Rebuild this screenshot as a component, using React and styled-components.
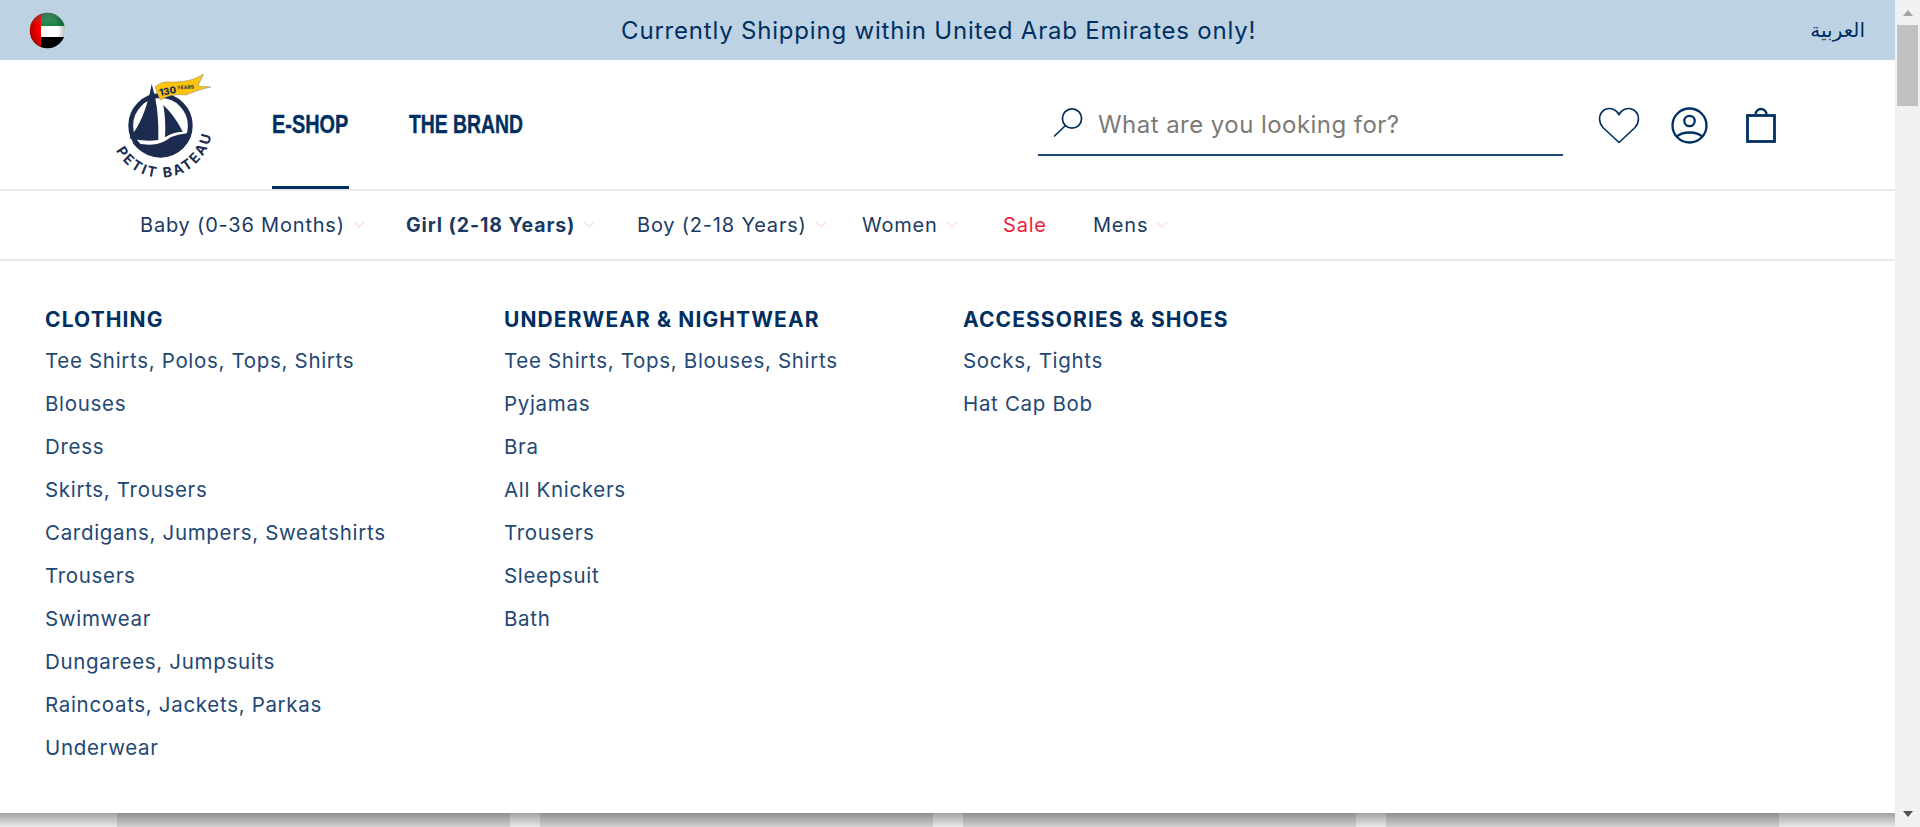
import React from 'react'
import styled, { createGlobalStyle } from 'styled-components'

const GlobalStyle = createGlobalStyle`
    html, body {
        margin: 0;
        padding: 0;
        background: #fff;
        overflow: hidden;
    }
    * {
        box-sizing: border-box;
    }
`

const BODY_FONT = `Inter, "Noto Sans", sans-serif`
const NAV_FONT = `"Liberation Sans", sans-serif`

const Page = styled.div`
    display: flex;
    width: 1920px;
    height: 827px;
    overflow: hidden;
    font-family: ${BODY_FONT};
`

const Main = styled.div`
    flex: 1;
    display: flex;
    flex-direction: column;
    min-width: 0;
`

const Banner = styled.div`
    height: 60px;
    background: #bdd3e3;
    display: flex;
    align-items: center;
    justify-content: space-between;
    padding: 0 30px 0 29px;
`

const BannerText = styled.div`
    font-size: 24px;
    font-weight: 400;
    color: #002f61;
    letter-spacing: 0.8px;
    margin-left: 1px;
`

const ArabicLink = styled.a`
    font-family: "DejaVu Sans", sans-serif;
    font-size: 20px;
    color: #002f61;
`

const Header = styled.div`
    height: 131px;
    display: flex;
    align-items: stretch;
    padding-left: 115px;
    border-bottom: 2px solid #e9e9e9;
`

const LogoWrap = styled.div`
    width: 100px;
    margin-right: 57px;
    padding-top: 12px;
`

const LogoSvg = styled.svg`
    overflow: visible;
`

const TopNav = styled.nav`
    display: flex;
    gap: 60px;
`

const TopNavItem = styled.a`
    width: ${props => props.$width}px;
    display: flex;
    align-items: center;
    padding-top: 3px;
    border-bottom: 3px solid ${props => props.$active ? '#002f61' : 'transparent'};
`

const TopNavLabel = styled.span`
    font-family: ${NAV_FONT};
    font-weight: 700;
    font-size: 26px;
    color: #002f61;
    white-space: nowrap;
    -webkit-text-stroke: 0.4px #002f61;
    transform: scaleX(${props => props.$squeeze});
    transform-origin: left center;
`

const SearchBox = styled.div`
    width: 525px;
    height: 96px;
    margin-left: ${props => props.$offset}px;
    display: flex;
    align-items: center;
    gap: 15px;
    padding: 34px 0 0 15px;
    border-bottom: 2px solid #1c4a78;
`

const SearchGlyph = styled.svg`
    margin-top: -5px;
    flex: none;
`

const Placeholder = styled.span`
    font-size: 24px;
    font-weight: 400;
    letter-spacing: 0.45px;
    color: #7d7a76;
`

const IconRow = styled.div`
    display: flex;
    margin-left: 35px;
    padding-top: 47px;
    align-items: flex-start;
    gap: 31px;
`

const BagGlyph = styled.svg`
    margin-left: 7px;
`

const SubNav = styled.nav`
    height: 70px;
    display: flex;
    align-items: center;
    padding-left: 140px;
    border-bottom: 2px solid #e9e9e9;
    flex: none;
`

const SubNavItem = styled.a`
    display: flex;
    align-items: center;
    width: ${props => props.$width}px;
    font-size: ${props => props.$bold ? 19.5 : 20}px;
    letter-spacing: ${props => props.$bold ? 0.9 : 0.8}px;
    font-weight: ${props => props.$bold ? 700 : 400};
    color: ${props => props.$red ? '#ee1c3a' : '#1a3a63'};
`

const Chevron = styled.svg`
    margin-left: 8px;
    flex: none;
`

const Menu = styled.div`
    flex: 1;
    display: flex;
    padding: 46px 0 0 45px;
`

const MenuColumn = styled.div`
    width: 459px;
    display: flex;
    flex-direction: column;
`

const MenuTitle = styled.div`
    height: 37px;
    line-height: 26px;
    font-size: 21px;
    font-weight: 700;
    letter-spacing: 1.1px;
    color: #002f61;
`

const MenuLink = styled.a`
    height: 43px;
    line-height: 33px;
    font-size: 20.5px;
    font-weight: 400;
    letter-spacing: 0.68px;
    color: #1f4874;
`

const Peek = styled.div`
    flex: none;
    height: 14px;
    position: relative;
    display: flex;
    gap: 30px;
    padding-left: 117px;
    background: #f0f0f0;
`

const PeekCard = styled.div`
    width: 393px;
    background: #d6d6d6;
`

const PeekShadow = styled.div`
    position: absolute;
    inset: 0;
    background: linear-gradient(to bottom, rgba(0, 0, 0, 0.33), rgba(0, 0, 0, 0.03));
`

const Scrollbar = styled.div`
    width: 25px;
    flex: none;
    background: #f1f1f1;
    display: flex;
    flex-direction: column;
    align-items: center;
    padding-top: 10px;
`

const ScrollThumb = styled.div`
    width: 21px;
    height: 81px;
    margin-top: 9px;
    background: #c1c1c1;
`

const ScrollArrow = styled.div`
    width: 0;
    height: 0;
    border-left: 5.5px solid transparent;
    border-right: 5.5px solid transparent;
    border-${props => props.$down ? 'top' : 'bottom'}: 6px solid ${props => props.$down ? '#505050' : '#a3a3a3'};
    margin-top: ${props => props.$down ? 'auto' : '0'};
    margin-bottom: ${props => props.$down ? '10px' : '0'};
`

const clothing = ['Tee Shirts, Polos, Tops, Shirts', 'Blouses', 'Dress', 'Skirts, Trousers', 'Cardigans, Jumpers, Sweatshirts', 'Trousers', 'Swimwear', 'Dungarees, Jumpsuits', 'Raincoats, Jackets, Parkas', 'Underwear']
const underwear = ['Tee Shirts, Tops, Blouses, Shirts', 'Pyjamas', 'Bra', 'All Knickers', 'Trousers', 'Sleepsuit', 'Bath']
const accessories = ['Socks, Tights', 'Hat Cap Bob']

const columns = [
    { title: 'CLOTHING', links: clothing },
    { title: 'UNDERWEAR & NIGHTWEAR', links: underwear },
    { title: 'ACCESSORIES & SHOES', links: accessories },
]

const subNav = [
    { label: 'Baby (0-36 Months)', width: 266, chevron: true },
    { label: 'Girl (2-18 Years)', width: 231, chevron: true, bold: true },
    { label: 'Boy (2-18 Years)', width: 225, chevron: true },
    { label: 'Women', width: 141, chevron: true },
    { label: 'Sale', width: 90, red: true },
    { label: 'Mens', width: 100, chevron: true },
]

function Flag() {
    return (
        <svg width="37" height="37" viewBox="0 0 37 37">
            <defs>
                <clipPath id="flagClip"><circle cx="18.5" cy="18.5" r="17.8" /></clipPath>
                <radialGradient id="flagShade" cx="0.5" cy="0.5" r="0.5">
                    <stop offset="0.6" stopColor="#000" stopOpacity="0" />
                    <stop offset="1" stopColor="#000" stopOpacity="0.28" />
                </radialGradient>
                <linearGradient id="flagShine" x1="0" y1="0" x2="0" y2="1">
                    <stop offset="0" stopColor="#fff" stopOpacity="0.22" />
                    <stop offset="0.35" stopColor="#fff" stopOpacity="0" />
                </linearGradient>
            </defs>
            <g clipPath="url(#flagClip)">
                <rect x="0" y="0" width="37" height="14" fill="#1c8245" />
                <rect x="0" y="14" width="37" height="11" fill="#fff" />
                <rect x="0" y="25" width="37" height="12" fill="#000" />
                <rect x="0" y="0" width="12" height="37" fill="#f40000" />
                <circle cx="18.5" cy="18.5" r="17.8" fill="url(#flagShine)" />
                <circle cx="18.5" cy="18.5" r="17.8" fill="url(#flagShade)" />
            </g>
        </svg>
    )
}

function Logo() {
    return (
        <LogoSvg width="100" height="108" viewBox="0 0 100 108">
            <defs>
                <path id="logoArc" d="M1 78.5 A 51 51 0 0 0 97 53" />
            </defs>
            <circle cx="45.5" cy="53.5" r="29.8" fill="none" stroke="#1c2b4f" strokeWidth="4.8" />
            <path d="M17 70 Q 30 74 42 72 Q 50 70 56 65 Q 64 62 74 61 A 32 32 0 0 1 17 70 Z" fill="#1c2b4f" />
            <path d="M36.7 12 Q 30 48 14.3 66.3 Q 30 70 43.3 68 Q 44 44 40 24.7 Z" fill="#1c2b4f" />
            <path d="M48.3 33 Q 60 44 67.7 59.7 Q 58 60 50 65.3 Q 51 48 48.3 33 Z" fill="#1c2b4f" />
            <path d="M40 15 Q 47 9 55 10 Q 75 11 88.5 2 L 83 14 L 96 15 Q 85 17 71 23 Q 58 21 45 28 Z" fill="#fcc30f" stroke="#6a6f7a" strokeWidth="0.4" />
            <text x="45" y="24" fontFamily="Inter, sans-serif" fontWeight="800" fontSize="9.5" fill="#1c2b4f" transform="rotate(-11 45 24)">130</text>
            <text x="62" y="17.5" fontFamily="Inter, sans-serif" fontWeight="700" fontSize="5" fill="#1c2b4f" transform="rotate(-3 62 17.5)">YEARS</text>
            <text fontFamily="Inter, sans-serif" fontWeight="700" fontSize="14" fill="#1c2b4f">
                <textPath href="#logoArc" textLength="126" lengthAdjust="spacing">PETIT BATEAU</textPath>
            </text>
        </LogoSvg>
    )
}

function SearchIcon() {
    return (
        <SearchGlyph width="30" height="30" viewBox="0 0 30 30" fill="none" stroke="#002f61" strokeWidth="1.7">
            <circle cx="19" cy="11.5" r="9.6" />
            <path d="M12.5 18.5 L1.5 29" strokeLinecap="round" />
        </SearchGlyph>
    )
}

function HeartIcon() {
    return (
        <svg width="42" height="37" viewBox="0 0 42 37" fill="none" stroke="#002f61" strokeWidth="1.6">
            <path d="M21 35.5 L5 20.5 C 0 15 0.5 6.5 6.5 2.8 C 12 0 18 2 21 7.5 C 24 2 30 0 35.5 2.8 C 41.5 6.5 42 15 37 20.5 Z" />
        </svg>
    )
}

function UserIcon() {
    return (
        <svg width="37" height="37" viewBox="0 0 37 37" fill="none" stroke="#002f61" strokeWidth="2.3">
            <circle cx="18.5" cy="18.5" r="17" />
            <circle cx="18.5" cy="14" r="5.2" />
            <path d="M5.5 30 C 11 24 26 24 31.5 30" />
        </svg>
    )
}

function BagIcon() {
    return (
        <BagGlyph width="30" height="36" viewBox="0 0 30 36" fill="none" stroke="#002f61">
            <rect x="1.5" y="8.5" width="27" height="26" strokeWidth="2.8" />
            <path d="M9.5 7.5 A 5.5 5.5 0 0 1 20.5 7.5" strokeWidth="2.3" />
        </BagGlyph>
    )
}

export default function App() {
    return (
        <Page>
            <GlobalStyle />
            <Main>
                <Banner>
                    <Flag />
                    <BannerText>Currently Shipping within United Arab Emirates only!</BannerText>
                    <ArabicLink>العربية</ArabicLink>
                </Banner>
                <Header>
                    <LogoWrap><Logo /></LogoWrap>
                    <TopNav>
                        <TopNavItem $active $width={77}><TopNavLabel $squeeze={0.765}>E-SHOP</TopNavLabel></TopNavItem>
                        <TopNavItem $width={114}><TopNavLabel $squeeze={0.745}>THE BRAND</TopNavLabel></TopNavItem>
                    </TopNav>
                    <SearchBox $offset={515}>
                        <SearchIcon />
                        <Placeholder>What are you looking for?</Placeholder>
                    </SearchBox>
                    <IconRow>
                        <HeartIcon />
                        <UserIcon />
                        <BagIcon />
                    </IconRow>
                </Header>
                <SubNav>
                    {subNav.map(item => (
                        <SubNavItem key={item.label} $width={item.width} $bold={item.bold} $red={item.red}>
                            {item.label}
                            {item.chevron && (
                                <Chevron width="12" height="8" viewBox="0 0 12 8" fill="none" stroke="#fbe9ea" strokeWidth="2">
                                    <path d="M1 1 L6 6 L11 1" />
                                </Chevron>
                            )}
                        </SubNavItem>
                    ))}
                </SubNav>
                <Menu>
                    {columns.map(col => (
                        <MenuColumn key={col.title}>
                            <MenuTitle>{col.title}</MenuTitle>
                            {col.links.map(link => <MenuLink key={link}>{link}</MenuLink>)}
                        </MenuColumn>
                    ))}
                </Menu>
                <Peek>
                    <PeekCard />
                    <PeekCard />
                    <PeekCard />
                    <PeekCard />
                    <PeekShadow />
                </Peek>
            </Main>
            <Scrollbar>
                <ScrollArrow />
                <ScrollThumb />
                <ScrollArrow $down />
            </Scrollbar>
        </Page>
    )
}
